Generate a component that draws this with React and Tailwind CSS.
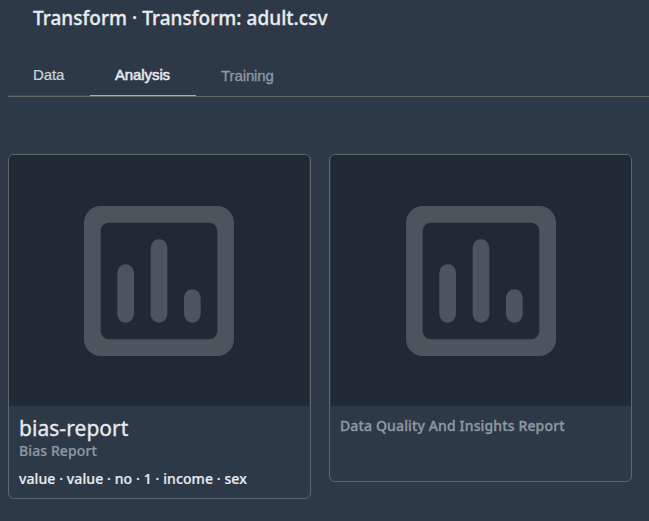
function ChartIcon() {
  return (
    <svg className="size-[150px] text-[#4c555e]" viewBox="0 0 18 18" fill="none">
      <path
        fill="currentColor"
        fillRule="evenodd"
        d="M2 0h14a2 2 0 0 1 2 2v14a2 2 0 0 1-2 2H2a2 2 0 0 1-2-2V2a2 2 0 0 1 2-2Zm1 2a1 1 0 0 0-1 1v12a1 1 0 0 0 1 1h12a1 1 0 0 0 1-1V3a1 1 0 0 0-1-1H3Z"
      />
      <path stroke="currentColor" strokeWidth="2" strokeLinecap="round" d="M5 8v5M9 5v8M13 11v2" />
    </svg>
  );
}

function Card({ className, previewClassName, children }) {
  return (
    <article className={`w-[303px] overflow-hidden rounded-md border border-[#62666a] ${className}`}>
      <div className={`flex h-[251px] w-[300px] items-center justify-center bg-[#202a35] ${previewClassName}`}>
        <ChartIcon />
      </div>
      <div className="px-2.5 whitespace-nowrap">{children}</div>
    </article>
  );
}

export default function App() {
  return (
    <main className="h-[521px] w-[649px] overflow-hidden bg-[#2e3948] pl-2 font-['Noto_Sans',sans-serif] text-[#e8ebef]">
      <h1 className="h-[55px] pt-1 pl-[25px] text-[19px] leading-7 font-medium tracking-[0.03px] whitespace-nowrap [-webkit-text-stroke:0.3px]">
        Transform · Transform: adult.csv
      </h1>
      <nav className="flex h-[42px] items-stretch border-b border-[#67686a] font-['Liberation_Sans',Arial,sans-serif] text-[15px] leading-5 tracking-[-0.1px]">
        <button className="w-[82px] border-b border-[#3d4854] pl-[25px] text-left text-[#d0d5db] [-webkit-text-stroke:0.2px]">Data</button>
        <button className="w-[106px] border-b border-[#a3abb9] pr-px text-center [-webkit-text-stroke:0.5px]">Analysis</button>
        <button className="pl-[25px] text-[#8f99a2] [-webkit-text-stroke:0.3px]">Training</button>
      </nav>
      <section className="mt-[57px] flex items-start gap-[18px]">
        <Card className="h-[345px]" previewClassName="mr-px">
          <h2 className="mt-2 text-[21px] leading-7 tracking-[0.05px] [-webkit-text-stroke:0.3px]">bias-report</h2>
          <p className="text-[14px] leading-[18px] font-medium tracking-[0.1px] text-[#8f99a2] [-webkit-text-stroke:0.2px]">
            Bias Report
          </p>
          <p className="mt-[9px] text-[14px] leading-5 font-medium tracking-[0.1px] [-webkit-text-stroke:0.2px]">
            value · value · no · 1 · income · sex
          </p>
        </Card>
        <Card className="h-[328px]" previewClassName="ml-px">
          <p className="mt-2.5 text-[14px] leading-5 font-medium tracking-[0.14px] text-[#8f99a2] [-webkit-text-stroke:0.3px]">
            Data Quality And Insights Report
          </p>
        </Card>
      </section>
    </main>
  );
}
